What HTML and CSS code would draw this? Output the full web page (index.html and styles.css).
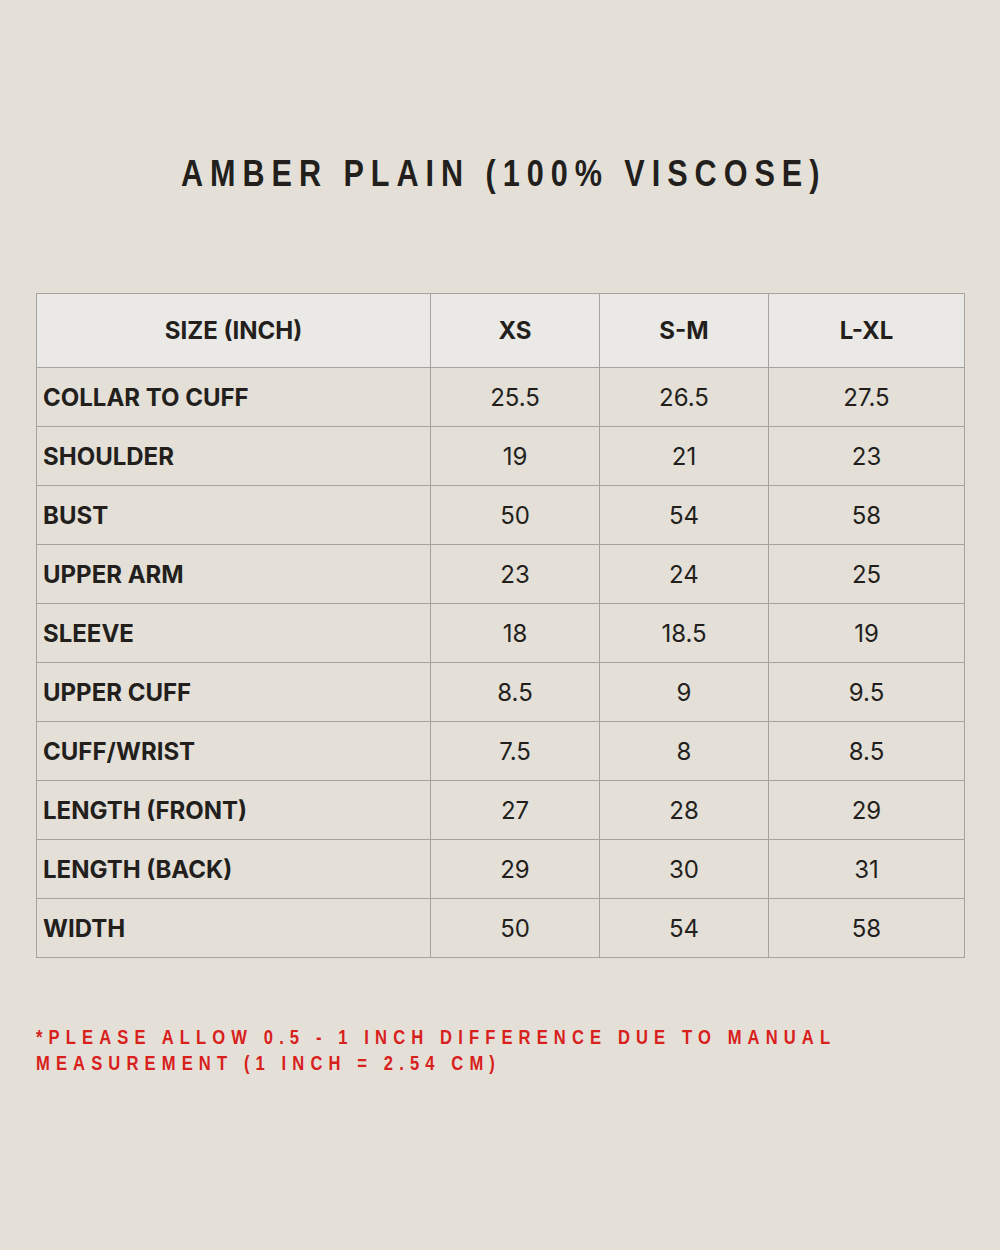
FILE: index.html
```html
<!DOCTYPE html>
<html>
<head>
<meta charset="utf-8">
<link rel="stylesheet" href="styles.css">
</head>
<body>
<div class="page">
  <h1 class="title"><span class="title-text">AMBER PLAIN (100% VISCOSE)</span></h1>
  <table class="chart">
    <colgroup>
      <col class="c-label"><col class="c-size"><col class="c-size"><col class="c-last">
    </colgroup>
    <thead>
      <tr><th>SIZE (INCH)</th><th>XS</th><th>S-M</th><th>L-XL</th></tr>
    </thead>
    <tbody>
      <tr><td class="lbl">COLLAR TO CUFF</td><td>25.5</td><td>26.5</td><td>27.5</td></tr>
      <tr><td class="lbl">SHOULDER</td><td>19</td><td>21</td><td>23</td></tr>
      <tr><td class="lbl">BUST</td><td>50</td><td>54</td><td>58</td></tr>
      <tr><td class="lbl">UPPER ARM</td><td>23</td><td>24</td><td>25</td></tr>
      <tr><td class="lbl">SLEEVE</td><td>18</td><td>18.5</td><td>19</td></tr>
      <tr><td class="lbl">UPPER CUFF</td><td>8.5</td><td>9</td><td>9.5</td></tr>
      <tr><td class="lbl">CUFF/WRIST</td><td>7.5</td><td>8</td><td>8.5</td></tr>
      <tr><td class="lbl">LENGTH (FRONT)</td><td>27</td><td>28</td><td>29</td></tr>
      <tr><td class="lbl">LENGTH (BACK)</td><td>29</td><td>30</td><td>31</td></tr>
      <tr><td class="lbl">WIDTH</td><td>50</td><td>54</td><td>58</td></tr>
    </tbody>
  </table>
  <p class="note"><span class="note-text">*PLEASE ALLOW 0.5 - 1 INCH DIFFERENCE DUE TO MANUAL<br>MEASUREMENT (1 INCH = 2.54 CM)</span></p>
</div>
</body>
</html>
```
FILE: styles.css
```css
html, body {
  margin: 0;
  padding: 0;
  background: #e4e0d8;
}
.page {
  width: 1000px;
  height: 1250px;
  box-sizing: border-box;
  padding: 153px 36px 0 36px;
  color: #231f1c;
}
.title {
  margin: 0;
  font-family: "Liberation Sans", Arial, sans-serif;
  font-weight: 700;
  font-size: 36px;
  line-height: 42px;
  text-align: center;
  color: #221f1c;
  white-space: nowrap;
}
.title-text {
  display: inline-block;
  letter-spacing: 8.2px;
  margin-right: -8.2px;
  transform: scaleX(0.85);
  transform-origin: center;
}
.chart {
  margin-top: 98px;
  width: 928px;
  border-collapse: collapse;
  table-layout: fixed;
  font-family: Inter, "Noto Sans", sans-serif;
  font-size: 24px;
  color: #231f1c;
}
.c-label { width: 394px; }
.c-size { width: 169px; }
.c-last { width: 196px; }
.chart th, .chart td {
  border: 1.5px solid #a6a29e;
  padding: 0;
}
.chart th {
  background: #ebe9e5;
  height: 73px;
  font-weight: 700;
  text-align: center;
}
.chart td {
  height: 58px;
  text-align: center;
  font-weight: 400;
}
.chart td.lbl {
  text-align: left;
  padding-left: 6px;
  font-weight: 700;
}
.note {
  margin: 66px 0 0 0;
  font-family: "Liberation Sans", Arial, sans-serif;
  font-weight: 700;
  font-size: 19.5px;
  line-height: 26px;
  color: #d8201c;
  white-space: nowrap;
}
.note-text {
  display: inline-block;
  letter-spacing: 7.2px;
  transform: scaleX(0.85);
  transform-origin: left;
}
```
